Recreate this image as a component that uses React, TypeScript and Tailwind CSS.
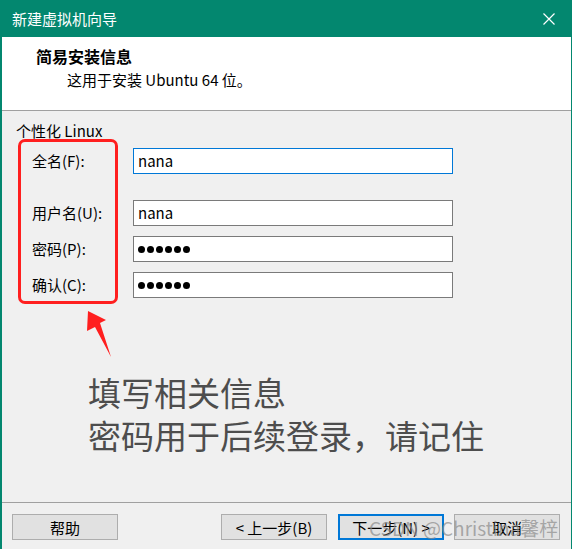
import React from 'react';

const font = { fontFamily: '"Noto Sans CJK SC", "Noto Sans", sans-serif' };

const Dots: React.FC = () => (
  <div className="flex items-center gap-[2px]">
    {[0, 1, 2, 3, 4, 5].map((i) => (
      <span key={i} className="w-[7px] h-[7px] rounded-full bg-black" />
    ))}
  </div>
);

interface RowProps {
  label: string;
  focused?: boolean;
  className?: string;
  children: React.ReactNode;
}

const Row: React.FC<RowProps> = ({ label, focused, className, children }) => (
  <div className={`flex items-center ${className ?? ''}`}>
    <div className="w-[101px] text-[15px] leading-[20px] text-black">{label}</div>
    <div
      className={`w-[320px] h-[26px] bg-white flex items-center pl-[4px] text-[15px] text-black border ${
        focused ? 'border-[#0078d7]' : 'border-[#7a7a7a]'
      }`}
    >
      {children}
    </div>
  </div>
);

const Btn: React.FC<{ children: React.ReactNode; primary?: boolean; className?: string }> = ({
  children,
  primary,
  className,
}) => (
  <button
    className={`w-[106px] h-[26px] bg-[#e1e1e1] text-[15px] leading-none text-black flex items-center justify-center ${
      primary ? 'border-2 border-[#0078d7]' : 'border border-[#adadad]'
    } ${className ?? ''}`}
  >
    {children}
  </button>
);

export default function App() {
  return (
    <div
      className="relative w-[572px] h-[549px] bg-[#f0f0f0] border-l-2 border-r border-[#03876f] flex flex-col overflow-hidden"
      style={font}
    >
      {/* Title bar */}
      <div className="h-[37px] bg-[#03876f] flex items-center justify-between pl-[10px] pr-[16px]">
        <span className="text-white text-[15px] leading-none">新建虚拟机向导</span>
        <svg width="12" height="12" viewBox="0 0 12 12">
          <path d="M0.5 0.5 L11.5 11.5 M11.5 0.5 L0.5 11.5" stroke="white" strokeWidth="1.2" />
        </svg>
      </div>

      {/* Header */}
      <div className="h-[74px] bg-white border-b border-[#a0a0a0] pl-[34px] pt-[9px]">
        <div className="text-[16px] leading-[20px] font-bold text-black">简易安装信息</div>
        <div className="ml-[31px] mt-[4px] text-[15px] leading-[20px] text-black">这用于安装 Ubuntu 64 位。</div>
      </div>

      {/* Body */}
      <div className="flex-1 px-[14px] pt-[10px]">
        <div className="text-[15px] leading-[20px] text-black">个性化 Linux</div>
        <div className="mt-[7px] ml-[16px] flex flex-col">
          <Row label="全名(F):" focused>
            nana
          </Row>
          <Row label="用户名(U):" className="mt-[26px]">
            nana
          </Row>
          <Row label="密码(P):" className="mt-[10px]">
            <Dots />
          </Row>
          <Row label="确认(C):" className="mt-[10px]">
            <Dots />
          </Row>
        </div>
        <div className="mt-[73px] ml-[72px] text-[33px] leading-[43px] text-[#4d4d4d]">
          <div>填写相关信息</div>
          <div>密码用于后续登录，请记住</div>
        </div>
      </div>

      {/* Footer */}
      <div className="h-[47px] border-t border-[#a0a0a0] flex items-start justify-between pt-[11px] pl-[10px] pr-[11px]">
        <Btn>帮助</Btn>
        <div className="flex">
          <Btn>&lt; 上一步(B)</Btn>
          <Btn primary className="ml-[11px]">
            下一步(N) &gt;
          </Btn>
          <Btn className="ml-[10px]">取消</Btn>
        </div>
      </div>

      {/* Annotations */}
      <div className="absolute left-[16px] top-[139px] w-[100px] h-[165px] border-[3px] border-[#ff1f1f] rounded-[7px] pointer-events-none" />
      <svg
        className="absolute left-[-2px] top-0 pointer-events-none"
        width="572"
        height="549"
        viewBox="0 0 572 549"
      >
        <polygon points="88,311 106,320 100,323 111,357 95,327 87,331" fill="#ff1f1f" />
      </svg>
      <div className="absolute left-[367px] top-[516px] text-[19px] leading-[24px] text-[#8a8a8a]/70 pointer-events-none whitespace-nowrap">
        CSDN @Christina馨梓
      </div>
    </div>
  );
}
